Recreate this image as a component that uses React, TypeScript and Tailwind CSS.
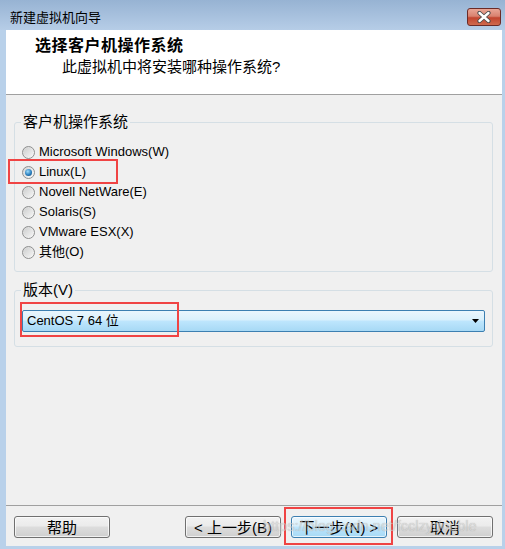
import React from 'react';

const osList = [
  { label: 'Microsoft Windows(W)', checked: false },
  { label: 'Linux(L)', checked: true },
  { label: 'Novell NetWare(E)', checked: false },
  { label: 'Solaris(S)', checked: false },
  { label: 'VMware ESX(X)', checked: false },
  { label: '其他(O)', checked: false },
];

function Radio({ checked }: { checked: boolean }) {
  return (
    <span className="w-[13px] h-[13px] rounded-full border border-[#8e8f8f] bg-gradient-to-br from-[#d4d4d4] to-[#fbfbfb] flex items-center justify-center shrink-0">
      {checked ? (
        <span className="w-[7px] h-[7px] rounded-full bg-[radial-gradient(circle_at_40%_35%,#9edcfb,#2a7fbf_55%,#0f426e)]" />
      ) : (
        <span className="w-[9px] h-[9px] rounded-full bg-gradient-to-br from-[#cfd0d0] to-[#f4f4f4]" />
      )}
    </span>
  );
}

function WinButton({ children, primary = false }: { children: React.ReactNode; primary?: boolean }) {
  return (
    <div
      className={`w-[96px] h-[22px] rounded-[3px] border flex items-center justify-center text-[15px] leading-none text-black shadow-[inset_0_0_0_1px_rgba(255,255,255,0.7)] ${
        primary
          ? 'border-[#3c7fb1] bg-[linear-gradient(#eaf6fd_0%,#d9f0fc_45%,#bee6fd_50%,#a7d9f5_100%)]'
          : 'border-[#707070] bg-[linear-gradient(#f2f2f2_0%,#ebebeb_45%,#dddddd_50%,#cfcfcf_100%)]'
      }`}
    >
      {children}
    </div>
  );
}

export default function App() {
  return (
    <div className="relative w-[505px] h-[549px] bg-[#b9d1ea] flex flex-col overflow-hidden font-['Liberation_Sans','Noto_Sans_CJK_SC',sans-serif] text-black">
      {/* Title bar */}
      <div className="h-[30px] shrink-0 flex items-start justify-between pl-[10px] pr-[4px] bg-gradient-to-b from-[#97b3d3] to-[#b6cde7]">
        <span className="text-[13px] leading-[16px] mt-[10px]">新建虚拟机向导</span>
        <div className="mt-[8px] w-[34px] h-[18px] rounded-[3px] border border-[#6b2b27] bg-[linear-gradient(#e9a696_0%,#d9826f_45%,#c2452f_55%,#cf6a4e_100%)] flex items-center justify-center">
          <svg width="14" height="12" viewBox="0 0 14 12">
            <path d="M2.5 2 L11.5 10 M11.5 2 L2.5 10" stroke="#4a4a4a" strokeWidth="4.2" strokeLinecap="round" />
            <path d="M2.5 2 L11.5 10 M11.5 2 L2.5 10" stroke="#ffffff" strokeWidth="2.4" strokeLinecap="round" />
          </svg>
        </div>
      </div>

      {/* Client area */}
      <div className="flex-1 flex flex-col ml-[6px] mr-[3px] mb-[3px] bg-[#f0f0f0]">
        {/* Header */}
        <div className="h-[65px] shrink-0 bg-white border-b border-[#a0a0a0] pl-[29px] pt-[6px]">
          <div className="text-[16px] leading-[20px] font-bold tracking-[0.5px]">选择客户机操作系统</div>
          <div className="text-[15px] leading-[20px] mt-[1px] pl-[27px]">此虚拟机中将安装哪种操作系统?</div>
        </div>

        {/* Body */}
        <div className="flex-1 flex flex-col pl-[8px] pr-[9px]">
          <fieldset className="mt-[18px] border border-[#d5dfe5] rounded-[3px] pb-[9px] pl-[7px]">
            <legend className="ml-[-1px] px-[2px] text-[15px] leading-[18px]">客户机操作系统</legend>
            <div className="pt-[11px] flex flex-col">
              {osList.map((os) => (
                <div key={os.label} className="h-[20px] flex items-center gap-[4px] text-[13px]">
                  <Radio checked={os.checked} />
                  <span>{os.label}</span>
                </div>
              ))}
            </div>
          </fieldset>

          <fieldset className="mt-[9px] border border-[#d5dfe5] rounded-[3px] pb-[14px] px-[7px]">
            <legend className="ml-[-1px] px-[2px] text-[15px] leading-[18px]">版本(V)</legend>
            <div className="mt-[11px] h-[22px] rounded-[2px] border border-[#3c7fb1] bg-[linear-gradient(#eaf6fd_0%,#d9f0fc_45%,#bee6fd_50%,#a7d9f5_100%)] flex items-center justify-between pl-[4px] pr-[5px]">
              <span className="text-[13px]">CentOS 7 64 位</span>
              <svg width="7" height="4" viewBox="0 0 7 4">
                <path d="M0 0 H7 L3.5 4 Z" fill="#000" />
              </svg>
            </div>
          </fieldset>

          <div className="flex-1" />
        </div>

        {/* Footer */}
        <div className="h-[41px] shrink-0 border-t border-[#a0a0a0] flex items-start pt-[10px] pl-[8px] pr-[9px]">
          <WinButton>帮助</WinButton>
          <div className="flex-1" />
          <div className="flex gap-[10px]">
            <WinButton>&lt; 上一步(B)</WinButton>
            <WinButton primary>下一步(N) &gt;</WinButton>
            <WinButton>取消</WinButton>
          </div>
        </div>
      </div>

      {/* Red annotation boxes */}
      <div className="absolute left-[8px] top-[159px] w-[110px] h-[25px] border-2 border-[#f04444]" />
      <div className="absolute left-[20px] top-[302px] w-[159px] h-[35px] border-2 border-[#f04444]" />
      <div className="absolute left-[284px] top-[507px] w-[109px] h-[38px] border-2 border-[#f04444]" />

      {/* Watermark */}
      <div className="absolute left-[263px] top-[516px] whitespace-nowrap text-[14.5px] leading-[20px] text-[#d0d0d0] opacity-60 font-['Liberation_Sans',sans-serif] [text-shadow:0_0_1px_#909090]">
        https://blog.csdn.net/fcclzydouble
      </div>
    </div>
  );
}
